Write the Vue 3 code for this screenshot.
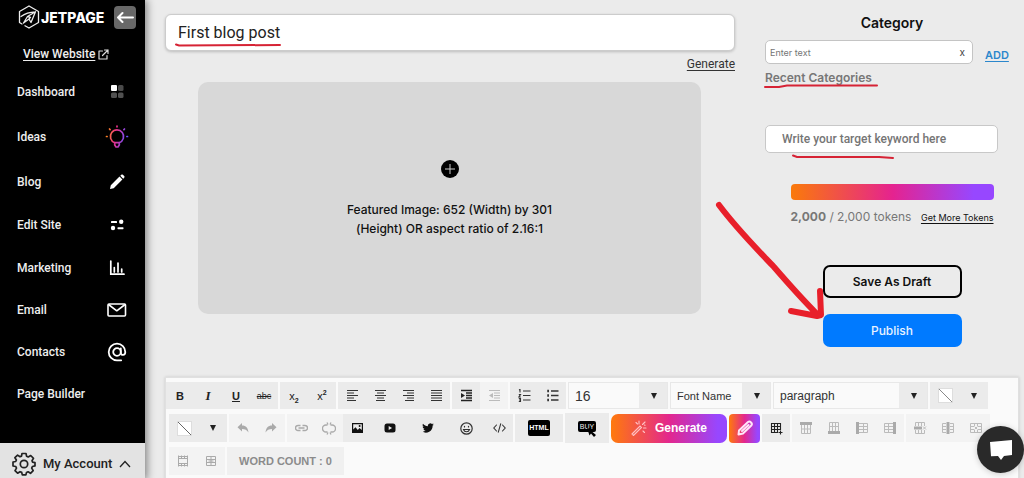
<script setup>
import { ref } from 'vue'

const title = ref('First blog post')
const category = ref('')
const keyword = ref('')

const nav = [
  { label: 'Dashboard', icon: 'grid' },
  { label: 'Ideas', icon: 'bulb', tall: true },
  { label: 'Blog', icon: 'pencil' },
  { label: 'Edit Site', icon: 'toggles' },
  { label: 'Marketing', icon: 'chart' },
  { label: 'Email', icon: 'mail' },
  { label: 'Contacts', icon: 'at' },
  { label: 'Page Builder', icon: '' },
]

const aligns = [
  { name: 'Align left', d: 'M1 1.500h11M1 4h7M1 6.500h11M1 9h7M1 11.500h9' },
  { name: 'Align center', d: 'M1 1.500h11M3 4h7M1 6.500h11M3 9h7M2 11.500h9' },
  { name: 'Align right', d: 'M1 1.500h11M5 4h7M1 6.500h11M5 9h7M3 11.500h9' },
  { name: 'Justify', d: 'M1 1.500h11M1 4h11M1 6.500h11M1 9h11M1 11.500h11' },
]

const tableTools = [
  { name: 'Row above', fill: 'M1 1h12v3H1z', d: 'M2.500 4v8.500h9V4M2.500 8h9M5.500 4v8.500M8.500 4v8.500' },
  { name: 'Row below', fill: 'M1 10h12v3H1z', d: 'M2.500 10V1.500h9V10M2.500 5.500h9M5.500 1.500V10M8.500 1.500V10' },
  { name: 'Column left', fill: 'M1 1h3v12H1z', d: 'M4 2.500h8.500v9H4M8.500 2.500v9M4 5.500h8.500M4 8.500h8.500' },
  { name: 'Column right', fill: 'M10 1h3v12h-3z', d: 'M10 2.500H1.500v9H10M5.500 2.500v9M1.500 5.500H10M1.500 8.500H10' },
]
const tableTools2 = [
  { name: 'Delete row', fill: 'M1 5.500h8v3H1z', d: 'M2.500 5V1.500h9V5M2.500 9v3.500h9V9M5.500 1.500V5M8.500 1.500V5M5.500 9v3.500M8.500 9v3.500M10 5.500l3 3M13 5.500l-3 3' },
  { name: 'Delete column', fill: 'M5.500 1h3v12h-3z', d: 'M5 2.500H1.500v9H5M9 2.500h3.500v9H9M1.500 5.500H5M1.500 8.500H5M9 5.500h3.500M9 8.500h3.500' },
  { name: 'Delete table', fill: '', d: 'M1.500 2.500h11v9h-11zM1.500 5.500H5M1.500 8.500H5M9 5.500h3.500M9 8.500h3.500M5.500 2.500V5M8.500 2.500V5M5.500 9v2.500M8.500 9v2.500M5.500 5.500l3 3M8.500 5.500l-3 3' },
]
</script>

<template>
  <div class="page">
    <aside class="sidebar">
      <div class="brand">
        <svg class="hex" width="22" height="24" viewBox="0 0 22 24" fill="none" stroke="#eee" stroke-width="1.300" stroke-linejoin="round" stroke-linecap="round">
          <path d="M11 1l9.500 5.500v11L11 23l-4-2.300M4 19l-2.500-1.500v-11L11 1" />
          <path d="M3 11.500c4-3 9-4.500 14.500-4.700L13 17.500l-2-3.500-5.500 4 4-6.500 3 .8-1.500 1.700M9.500 11.500L17.500 6.800" />
        </svg>
        <span class="brand-name">JETPAGE</span>
        <button class="back" aria-label="Collapse menu">
          <svg width="18" height="12" viewBox="0 0 18 12" fill="none" stroke="#fff" stroke-width="2" stroke-linecap="round" stroke-linejoin="round"><path d="M17 6.500H2M6.500 2L2 6.500 6.500 11" /></svg>
        </button>
      </div>
      <a href="#" class="view"><span>View Website</span>
        <svg width="11" height="11" viewBox="0 0 11 11" fill="none" stroke="#ddd" stroke-width="1.200" stroke-linecap="round" stroke-linejoin="round"><path d="M4.500 2H1v8h8V6.500M6.500 1H10v3.500M10 1L4.500 6.500" /></svg>
      </a>
      <nav>
        <a v-for="n in nav" :key="n.label" href="#" class="nav-item" :class="{ tall: n.tall }">
          <span>{{ n.label }}</span>
          <span class="nav-icon">
            <svg v-if="n.icon === 'grid'" width="14" height="14" viewBox="0 0 14 14"><rect x="1" width="6" height="6" rx="1" fill="#fff" /><rect x="8" width="5.500" height="6" rx="1.500" fill="#4a4a4a" /><rect x="1" y="7.500" width="6" height="5.500" rx="1.500" fill="#505050" /><rect x="8" y="7.500" width="5.500" height="5.500" rx="1.500" fill="#505050" /></svg>
            <svg v-else-if="n.icon === 'bulb'" class="bulb" width="24" height="24" viewBox="0 0 24 24" fill="none" stroke="url(#bulb)" stroke-width="1.700" stroke-linecap="round">
              <defs><linearGradient id="bulb" gradientUnits="userSpaceOnUse" x1="2" y1="6" x2="22" y2="10"><stop offset="0" stop-color="#ff8a1c" /><stop offset=".45" stop-color="#e8308c" /><stop offset="1" stop-color="#6a50ff" /></linearGradient></defs>
              <path d="M9.700 17.700A6.600 6.600 0 1 1 14.300 17.700zM9.700 17.700v2.200l1.300 2.100h2l1.300-2.100v-2.200M12 1v.8M4.500 4l.6.600M19.500 4l-.6.600M1.500 11.500h.6M21.900 11.500h.6" />
            </svg>
            <svg v-else-if="n.icon === 'pencil'" width="16" height="16" viewBox="0 0 16 16" fill="#fff"><path d="M1 15l.8-3.700 8.700-8.700 2.900 2.900-8.700 8.700zM11.300 1.800l1-1c.6-.6 1.100-.5 1.600 0l1.300 1.300c.5.500.5 1 0 1.600l-1 1z" /></svg>
            <svg v-else-if="n.icon === 'toggles'" width="14" height="12" viewBox="0 0 14 12" fill="#fff"><rect x="1" y="2" width="6" height="2" rx=".6" /><circle cx="11.200" cy="2.800" r="2.200" /><circle cx="3" cy="9" r="2.200" /><rect x="7.500" y="8.200" width="6" height="2" rx=".6" /></svg>
            <svg v-else-if="n.icon === 'chart'" width="16" height="16" viewBox="0 0 16 16" fill="none" stroke="#fff" stroke-width="1.700"><path d="M1.800 1v13.200H15M5.300 12V7.500M9 12V3M12.700 12V9" stroke-linecap="round" /></svg>
            <svg v-else-if="n.icon === 'mail'" width="20" height="14" viewBox="0 0 20 14" fill="none" stroke="#fff" stroke-width="1.600" stroke-linejoin="round"><rect x="1" y="1" width="17.500" height="12" rx="1" /><path d="M1.500 1.500l8.300 6.300L18 1.500" /></svg>
            <svg v-else-if="n.icon === 'at'" width="20" height="20" viewBox="0 0 20 20" fill="none" stroke="#fff" stroke-width="1.800" stroke-linecap="round"><circle cx="10" cy="10" r="3.800" /><path d="M13.800 6.500v4.300c0 3 4.500 3 4.500-.8a8.300 8.300 0 1 0-8.300 8.300h4.200" /></svg>
          </span>
        </a>
      </nav>
      <button class="account">
        <svg width="24" height="24" viewBox="0 0 24 24" fill="none" stroke="#222" stroke-width="1.700" stroke-linejoin="round"><circle cx="12" cy="12" r="3.700" /><path d="M10 1.500h4l.6 2.800 1.600.7 2.500-1.500 2.800 2.800L20 8.700l.6 1.500 2.400.5v3.200l-2.600.6-.7 1.600 1.500 2.500-2.700 2.700-2.400-1.500-1.600.7-.6 2.400h-3.600l-.6-2.500-1.700-.7-2.400 1.500-2.600-2.600 1.500-2.500-.7-1.600L1 14v-4l2.700-.5.7-1.500-1.500-2.300 2.700-2.600L8 4.700l1.500-.6z" /></svg>
        <span>My Account</span>
        <svg width="12" height="8" viewBox="0 0 12 8" fill="none" stroke="#222" stroke-width="1.300"><path d="M1 7l5-5.500L11 7" /></svg>
      </button>
    </aside>

    <main>
      <div class="upper">
        <section class="post">
          <div class="title-wrap">
            <input v-model="title" class="title" aria-label="Post title">
            <svg class="mark mark-title" width="108" height="6" viewBox="0 0 108 6"><path d="M2 2.500l3 1L106 3" /></svg>
          </div>
          <a href="#" class="generate-link">Generate</a>
          <button class="featured">
            <svg width="18" height="18" viewBox="0 0 18 18"><circle cx="9" cy="9" r="9" /><path d="M9 4v10M4 9h10" stroke="#ccc" stroke-width="1" /></svg>
            <span>Featured Image: 652 (Width) by 301 (Height) OR aspect ratio of 2.16:1</span>
          </button>
        </section>

        <section class="settings">
          <h2>Category</h2>
          <div class="cat-row">
            <div class="cat-field">
              <input v-model="category" placeholder="Enter text" aria-label="Category">
              <button aria-label="Clear">x</button>
            </div>
            <a href="#" class="add">ADD</a>
          </div>
          <div class="recent">Recent Categories
            <svg class="mark mark-recent" width="116" height="6" viewBox="0 0 116 6"><path d="M2 4h14l8-1.500h90" /></svg>
          </div>
          <div class="keyword">
            <input v-model="keyword" placeholder="Write your target keyword here" aria-label="Target keyword">
            <svg class="mark mark-keyword" width="104" height="6" viewBox="0 0 104 6"><path d="M2 1.500l4 1.500h82l14 1" /></svg>
          </div>
          <div class="bar"></div>
          <div class="tokens"><span><b>2,000</b> / 2,000 tokens</span><a href="#">Get More Tokens</a></div>
          <div class="actions">
            <button class="draft">Save As Draft</button>
            <button class="publish">Publish</button>
            <svg class="arrow" width="112" height="122" viewBox="0 0 112 122" fill="none" stroke="#e81f2a" stroke-width="6" stroke-linecap="round" stroke-linejoin="round"><path d="M5 5c18 24 36 42 55 62 13 15 27 31 43 47M77 111l26 5 4-1-1-24" /></svg>
          </div>
        </section>
      </div>

      <section class="editor">
        <div class="row first">
          <div class="group">
            <button class="t bold">B</button><button class="t italic">I</button><button class="t under">U</button><button class="t strike">abc</button>
          </div>
          <div class="group">
            <button class="t script">x<sub>2</sub></button><button class="t script">x<sup>2</sup></button>
          </div>
          <div class="group">
            <button v-for="a in aligns" :key="a.name" class="t" :aria-label="a.name"><svg width="13" height="13" viewBox="0 0 13 13" fill="none" stroke="#333" stroke-width="1.200"><path :d="a.d" /></svg></button>
          </div>
          <div class="group">
            <button class="t" aria-label="Indent"><svg width="13" height="13" viewBox="0 0 13 13" fill="none" stroke="#222" stroke-width="1.300"><path d="M1 1.500h11M6 4h6M6 6.500h6M6 9h6M1 11.500h11" /><path d="M1 4l4 2.500L1 9z" fill="#222" stroke="none" /></svg></button>
            <button class="t" disabled aria-label="Outdent"><svg width="13" height="13" viewBox="0 0 13 13" fill="none" stroke="#bbb" stroke-width="1"><path d="M1 1.500h11M6 4h6M6 6.500h6M6 9h6M1 11.500h11" /><path d="M5 4L1 6.500 5 9z" fill="#bbb" stroke="none" /></svg></button>
          </div>
          <div class="group">
            <button class="t" aria-label="Numbered list"><svg width="13" height="13" viewBox="0 0 13 13" fill="none" stroke="#333" stroke-width="1.100"><path d="M5 2h7.500M5 6.500h7.500M5 11h7.500M1 1l1-.5v3M.8 5.500h1.700L.8 8h2M.8 9.500h1.700v3H.8M1 11h1.500" /></svg></button>
            <button class="t" aria-label="Bulleted list"><svg width="13" height="13" viewBox="0 0 13 13" fill="none" stroke="#333" stroke-width="1.300"><path d="M5 2h7.500M5 6.500h7.500M5 11h7.500" /><path d="M1.300 .8h1.600v2.400H1.300zM1.300 5.300h1.600v2.400H1.300zM1.300 9.800h1.600v2.400H1.300z" fill="#222" stroke="none" /></svg></button>
          </div>
          <div class="pick size"><select aria-label="Font size"><option>16</option></select><i></i></div>
          <div class="pick font"><select aria-label="Font name"><option>Font Name</option></select><i></i></div>
          <div class="pick para"><select aria-label="Block format"><option>paragraph</option></select><i></i></div>
          <div class="group">
            <button class="t swatch-btn" aria-label="Text color"><span class="swatch"><svg width="13" height="13" viewBox="0 0 13 13"><path d="M0 0l13 13" stroke="#888" /></svg></span></button>
            <button class="t" aria-label="More text colors"><i class="caret"></i></button>
          </div>
        </div>

        <div class="row">
          <div class="group">
            <button class="t swatch-btn" aria-label="Highlight color"><span class="swatch"><svg width="13" height="13" viewBox="0 0 13 13"><path d="M0 0l13 13" stroke="#666" /></svg></span></button>
            <button class="t" aria-label="More highlight colors"><i class="caret"></i></button>
          </div>
          <div class="group pale">
            <button class="t" disabled aria-label="Undo"><svg width="12" height="10" viewBox="0 0 12 10" fill="#aaa"><path d="M5 0v2.500c4 0 6 2.500 6.500 7C10 7 8 6 5 6v2.500L.5 4.200z" /></svg></button>
            <button class="t" disabled aria-label="Redo"><svg width="12" height="10" viewBox="0 0 12 10" fill="#aaa"><path d="M7 0v2.500C3 2.500 1 5 .5 9.500 2 7 4 6 7 6v2.500l4.500-4.300z" /></svg></button>
          </div>
          <div class="group">
            <div class="half">
              <button class="t" disabled aria-label="Link"><svg width="13" height="8" viewBox="0 0 13 8" fill="none" stroke="#aaa" stroke-width="1.400"><path d="M5.500 6.500H3a2.500 2.500 0 0 1 0-5h2.500M7.500 1.500H10a2.500 2.500 0 0 1 0 5H7.500M3.500 4h6" /></svg></button>
              <button class="t" disabled aria-label="Unlink"><svg width="14" height="13" viewBox="0 0 14 13" fill="none" stroke="#aaa" stroke-width="1.300"><path d="M5.500 10H4a3.500 3.500 0 0 1 0-7h1.500M8.500 3H10a3.500 3.500 0 0 1 0 7H8.500M5 .5l1 2M9 .5L8 2.500M5 12.500l1-2M9 12.500l-1-2" /></svg></button>
            </div>
            <button class="t" aria-label="Image"><svg width="13" height="12" viewBox="0 0 13 12"><path fill="#111" fill-rule="evenodd" d="M1 1h11v10H1zM2.200 2.200v5.300l2.300-2.300 2.300 2.700L8.500 6l2.300 2V2.200z" /><circle cx="8.600" cy="4" r="1" fill="#111" /></svg></button>
            <button class="t wide" aria-label="YouTube"><svg width="12" height="10" viewBox="0 0 12 10"><rect y=".5" x=".5" width="11" height="9" rx="2.500" fill="#111" /><path d="M4.700 3v4l3.400-2z" fill="#eee" /></svg></button>
            <button class="t wide" aria-label="Twitter"><svg width="12" height="10" viewBox="0 0 24 20" fill="#111"><path d="M23.600 2.800c-.8.400-1.700.7-2.700.8 1-.6 1.700-1.500 2-2.600-.9.500-1.900.9-3 1.100a4.800 4.800 0 0 0-8.100 4.300C7.900 6.200 4.400 4.300 2 1.300a4.800 4.800 0 0 0 1.500 6.400c-.8 0-1.500-.2-2.200-.6 0 2.300 1.600 4.200 3.800 4.700-.7.200-1.400.2-2.100.1.600 1.900 2.300 3.200 4.400 3.300A9.600 9.600 0 0 1 .4 17.200a13.500 13.500 0 0 0 20.800-12c1-.7 1.800-1.500 2.400-2.400z" /></svg></button>
            <button class="t wide" aria-label="Emoji"><svg width="13" height="13" viewBox="0 0 13 13" fill="none" stroke="#333" stroke-width="1.200" stroke-linecap="round"><circle cx="6.500" cy="6.500" r="5.700" /><path d="M3.500 7.500c1 3 5 3 6 0zM4.500 4.300v.6M8.500 4.300v.6" /></svg></button>
            <button class="t" aria-label="Code"><svg width="13" height="10" viewBox="0 0 13 10" fill="none" stroke="#333" stroke-width="1.100" stroke-linecap="round"><path d="M3.500 2L.8 5l2.700 3M9.500 2l2.700 3-2.700 3M7.700.8L5.300 9.200" /></svg></button>
          </div>
          <div class="group"><button class="t html"><span>HTML</span></button></div>
          <div class="group buy-group"><button class="t buy"><span>BUY</span><svg width="9" height="9" viewBox="0 0 9 9"><path d="M0 0l7.500 2.500L5.500 4 9 7 7 9 4 5.500 2.500 7.500z" fill="#000" /></svg></button></div>
          <button class="magic">
            <svg width="16" height="16" viewBox="0 0 16 16" fill="none" stroke="#ffc2c5" stroke-width="1.100" stroke-linecap="round"><path d="M1 14l8-8 1.500 1.500-8 8zM8 1v3M5 2.500l1.500 1.500M11.500 4.500L14 2M12.500 8H15M12 11l1.500 1.500M13.500 5l.5.300" /></svg>
            Generate
          </button>
          <button class="magic pen" aria-label="Edit"><svg width="18" height="18" viewBox="0 0 18 18" fill="none" stroke="#ffe6f8" stroke-width="2" stroke-linejoin="round" stroke-linecap="round"><path d="M2.500 15.500l.5-4 9-8.500c2-1.500 5 1.500 3.300 3.500L7 14.500zM6 12L12.500 6" /></svg></button>
          <div class="group"><button class="t" aria-label="Insert table"><svg width="13" height="13" viewBox="0 0 13 13" fill="none" stroke="#222" stroke-width="1.100"><path d="M8 10.500H1.500v-9h9V8M1.500 4.500h9M1.500 7.500h9M4.500 1.500v9M7.500 1.500v9M8.500 10.500h4M10.500 8.500v4" /></svg></button></div>
          <div class="group pale">
            <button v-for="t in tableTools" :key="t.name" class="t" disabled :aria-label="t.name"><svg width="14" height="14" viewBox="0 0 14 14" fill="none" stroke="#bbb" stroke-width="1"><path :d="t.fill" fill="#aaa" stroke="none" /><path :d="t.d" /></svg></button>
          </div>
          <div class="group pale">
            <button v-for="t in tableTools2" :key="t.name" class="t" disabled :aria-label="t.name"><svg width="14" height="14" viewBox="0 0 14 14" fill="none" stroke="#bbb" stroke-width="1"><path v-if="t.fill" :d="t.fill" fill="#aaa" stroke="none" /><path :d="t.d" /></svg></button>
          </div>
        </div>

        <div class="row">
          <div class="group pale">
            <button class="t" disabled aria-label="Merge cells"><svg width="12" height="12" viewBox="0 0 12 12" fill="none" stroke="#aaa"><path d="M1.500 .5v11M10.500 .5v11M1.500 1.500h9M1.500 10.500h9M1.500 3.500h9M1.500 8.500h9M4.500 .5v3M7.500 .5v3M4.500 8.500v3M7.500 8.500v3" /></svg></button>
            <button class="t" disabled aria-label="Split cells"><svg width="12" height="12" viewBox="0 0 12 12" fill="none" stroke="#aaa"><path d="M1.500 1.500h9v9h-9zM1.500 4.500h9M1.500 7.500h9M6 1.500v9M3.500 6h5" /></svg></button>
          </div>
          <div class="count">WORD COUNT : 0</div>
        </div>
      </section>
    </main>

    <button class="chat" aria-label="Open chat"><svg width="24" height="22" viewBox="0 0 24 22" fill="#fff"><path d="M1 3l22-2v15l-8 1-3 4-3-4-7 .3z" /></svg></button>
  </div>
</template>

<style>
body { margin: 0; background: #ebebeb; overflow: hidden; }
</style>

<style scoped>
.page { position: relative; display: grid; grid-template-columns: 145px minmax(0, 1fr); height: 100vh; overflow: hidden; background: #ebebeb; font-family: Inter, "Liberation Sans", sans-serif; font-size: 12px; color: #111; }
* { box-sizing: border-box; }
button { font: inherit; color: inherit; border: 0; padding: 0; background: none; cursor: pointer; }
input, select { font: inherit; min-width: 0; }
svg { display: block; flex: none; }
a { color: inherit; }

.sidebar { display: flex; flex-direction: column; background: #000; color: #eee; box-shadow: 2px 0 8px rgba(0, 0, 0, .45); position: relative; font-family: Roboto, Inter, sans-serif; font-weight: 500; }
.brand { display: flex; align-items: center; height: 34px; padding: 0 9px 0 18px; }
.brand-name { margin-left: 1px; font-family: Inter, sans-serif; font-size: 14px; font-weight: 800; color: #fff; }
.back { display: grid; place-items: center; flex: none; width: 22px; height: 23px; margin-left: auto; border-radius: 4px; background: #686868; }
.view { display: flex; align-items: center; gap: 3px; height: 36px; padding: 4px 0 0 23px; text-decoration: none; }
.view span { text-decoration: underline; text-underline-offset: 2px; }
.nav-item { display: flex; align-items: center; justify-content: space-between; height: 43px; padding: 0 13px 0 17px; text-decoration: none; }
.nav-item.tall { height: 47px; }
.nav-item:nth-child(n+6) { height: 42px; }
.nav-icon { display: grid; place-items: center; width: 30px; }
.account { display: flex; align-items: center; gap: 7px; height: 37px; margin-top: auto; padding: 4px 0 0 12px; background: #e3e3e3; color: #222; font-size: 13px; }

main { display: flex; flex-direction: column; min-width: 0; padding: 14px 5px 0 20px; }
.upper { display: grid; grid-template-columns: minmax(0, 1fr) 254px; gap: 30px; height: 363px; flex: none; }
.post { display: flex; flex-direction: column; }
.title-wrap, .recent, .keyword, .actions { position: relative; }
.title { display: block; width: 100%; height: 37px; padding: 0 12px; border: 1px solid #ccc; border-radius: 6px; background: #fff; font-family: Roboto, Inter, sans-serif; font-size: 16px; color: #222; box-shadow: 0 1px 3px rgba(0, 0, 0, .2); }
.mark { position: absolute; fill: none; stroke: #d62335; stroke-width: 2; stroke-linecap: round; }
.mark-title { left: 9px; top: 28px; }
.generate-link { align-self: flex-end; height: 31px; line-height: 27px; text-underline-offset: 2px; color: #333; font-family: Roboto, Inter, sans-serif; }
.featured { display: flex; flex-direction: column; align-items: center; height: 232px; margin: 0 34px 0 33px; padding-top: 78px; gap: 22px; border-radius: 10px; background: #d8d8d8; font-weight: 500; line-height: 19px; }
.featured span { width: 230px; }

h2 { margin: 0; height: 26px; line-height: 18px; text-align: center; font-size: 14px; font-weight: 600; }
.cat-row { display: flex; gap: 12px; align-items: center; }
.cat-field { display: flex; align-items: center; width: 208px; height: 24px; padding: 0 7px 0 4px; border: 1px solid #c4c4c4; border-radius: 5px; background: #fff; }
.cat-field input { flex: 1; border: 0; padding: 0; background: none; font-size: 9px; outline: 0; }
.cat-field button { font-size: 10px; color: #444; }
input::placeholder { color: #757575; opacity: 1; }
.add { padding-top: 6px; font-size: 11px; font-weight: 600; color: #2b87cc; text-underline-offset: 2px; }
.recent { height: 61px; line-height: 27px; font-weight: 600; color: #777; }
.mark-recent { left: -2px; top: 19px; }
.keyword input { display: block; width: 233px; height: 28px; padding: 0 16px; border: 1px solid #c8c8c8; border-radius: 5px; background: #fff; font-family: Roboto, Inter, sans-serif; font-weight: 500; }
.mark-keyword { left: 26px; top: 29px; }
.bar { width: 203px; height: 16px; margin: 31px auto 0; border-radius: 4px; background: linear-gradient(90deg, #fa7a0a, #e5238f 50%, #9747ff 90%); }
.tokens { display: flex; align-items: baseline; justify-content: space-between; width: 203px; height: 65px; margin: 0 auto; padding-top: 9px; color: #777; white-space: nowrap; }
.tokens a { font-size: 9px; color: #111; text-underline-offset: 2px; }
.actions { display: grid; gap: 16px; width: 139px; margin: 0 auto; }
.draft, .publish { height: 33px; border-radius: 7px; font-weight: 600; }
.draft { border: 2px solid #000; }
.publish { background: #007aff; color: #e8f3ff; font-weight: 500; }
.arrow { position: absolute; right: 136px; top: -65px; pointer-events: none; }

.editor { flex: 1; padding-top: 4px; background: #fafafa; border: 1px solid #e0e0e0; border-bottom: 0; box-shadow: 0 0 3px rgba(0, 0, 0, .15); font-family: "Liberation Sans", Arial, sans-serif; }
.row { display: flex; align-items: center; gap: 2px; height: 28px; margin-bottom: 5px; padding-left: 3px; }
.row.first { padding-left: 0; height: 27px; }
.group { display: flex; flex: none; height: 100%; background: #ebebeb; }
.group.pale, .half { background: #f3f3f3; }
.half { display: flex; }
.t { display: grid; place-items: center; width: 28px; height: 100%; font-size: 11px; color: #222; }
.t:disabled { background: #f3f3f3; }
.wide { width: 38px; }
.bold { font-weight: 700; }
.italic { font-family: "Liberation Serif", serif; font-style: italic; font-weight: 700; font-size: 13px; }
.under { text-decoration: underline; font-weight: 700; }
.strike { font-size: 9px; text-decoration: line-through; }
.script { display: block; }
.script sub, .script sup { font-size: 7px; line-height: 0; font-weight: 700; }
.pick { position: relative; flex: none; height: 27px; }
.pick select { appearance: none; width: 100%; height: 100%; padding: 0 30px 0 6px; border: 1px solid #e8e8e8; border-radius: 0; background: linear-gradient(#ebebeb, #ebebeb) right / 28px 100% no-repeat #fafafa; color: #333; font-size: 11px; }
.pick i { position: absolute; right: 11px; top: 11px; pointer-events: none; }
.pick i, .caret { border: 3px solid transparent; border-top: 6px solid #222; border-bottom: 0; }
.size { width: 100px; }
.pick.size select { font-size: 14px; }
.font { width: 101px; }
.para { width: 155px; }
.pick.para select { font-size: 12px; }
.swatch-btn { width: 30px; }
.swatch { display: block; border: 1px solid #ddd; background: #fff; }
.html { width: 48px; }
.html span { padding: 0 1px; border-radius: 2px; background: #000; color: #fff; font: 700 7px/16px "Liberation Sans", sans-serif; }
.buy-group { height: 30px; }
.buy { position: relative; width: 44px; }
.buy span { padding: 0 2px; margin-bottom: 4px; border-radius: 2px; background: #000; color: #eee; font: 400 7px/11px "Liberation Sans", sans-serif; }
.buy svg { position: absolute; left: 22px; top: 15px; }
.magic { display: flex; align-items: center; justify-content: center; gap: 8px; flex: none; width: 116px; height: 29px; border-radius: 7px; background: linear-gradient(90deg, #ff7a0c, #e3278d 50%, #9747ff 92%); color: #fff; font-weight: 700; }
.magic.pen { width: 31px; border-radius: 4px; }
.count { height: 28px; padding: 0 12px; background: #f0f0f0; color: #8b8b8b; font-size: 11px; font-weight: 700; line-height: 28px; }
.chat { position: absolute; right: 0; bottom: 5px; display: grid; place-items: center; width: 47px; height: 47px; border-radius: 50%; background: #292929; box-shadow: 0 1px 6px rgba(0, 0, 0, .2); }
</style>
